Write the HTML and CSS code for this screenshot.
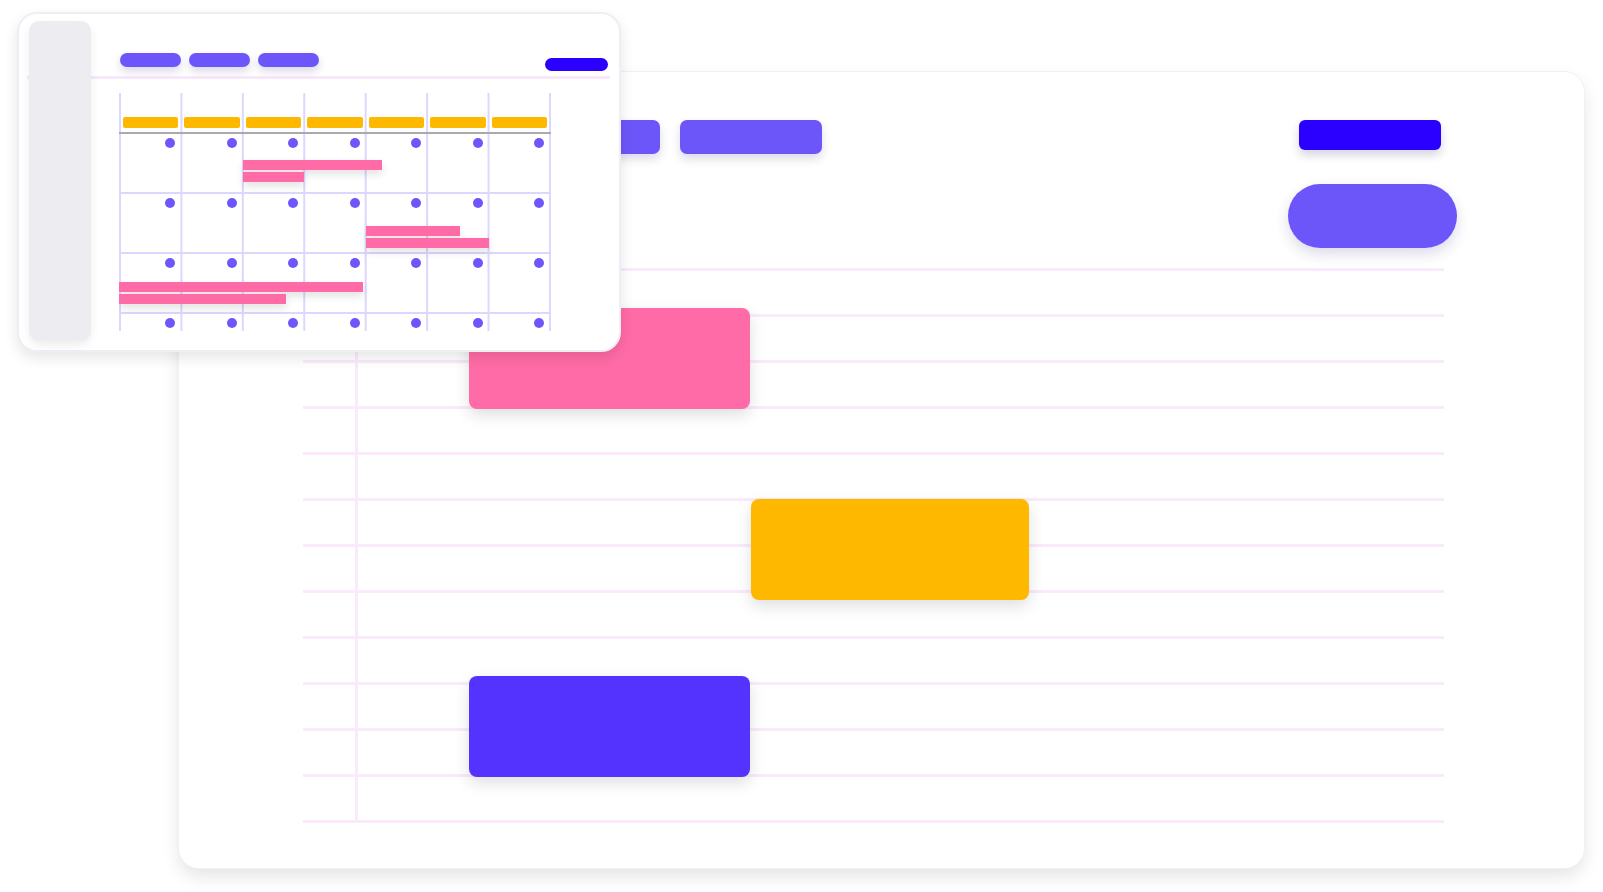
FILE: index.html
```html
<!DOCTYPE html>
<html lang="en">
<head>
<meta charset="utf-8">
<title>Schedule views</title>
<link rel="stylesheet" href="styles.css">
</head>
<body>
<div class="stage">
  <section class="board">
    <div class="board-head">
      <div class="tabs">
        <span class="tab"></span>
        <span class="tab"></span>
        <span class="tab"></span>
      </div>
      <div class="actions">
        <span class="btn-primary"></span>
        <span class="pill"></span>
      </div>
    </div>
    <div class="chart">
      <span class="blk blk-pink"></span>
      <span class="blk blk-yellow"></span>
      <span class="blk blk-purple"></span>
    </div>
  </section>

  <section class="mini">
    <aside class="side"></aside>
    <div class="mini-main">
      <div class="mini-head">
        <span class="mtab"></span>
        <span class="mtab"></span>
        <span class="mtab"></span>
        <span class="mbtn"></span>
      </div>
      <div class="cal">
        <div class="cal-head">
          <span class="day"><i></i></span><span class="day"><i></i></span><span class="day"><i></i></span><span class="day"><i></i></span><span class="day"><i></i></span><span class="day"><i></i></span><span class="day"><i></i></span>
        </div>
        <div class="week">
          <span class="cell"><b></b></span><span class="cell"><b></b></span><span class="cell"><b></b></span><span class="cell"><b></b></span><span class="cell"><b></b></span><span class="cell"><b></b></span><span class="cell"><b></b></span>
        </div>
        <div class="week">
          <span class="cell"><b></b></span><span class="cell"><b></b></span><span class="cell"><b></b></span><span class="cell"><b></b></span><span class="cell"><b></b></span><span class="cell"><b></b></span><span class="cell"><b></b></span>
        </div>
        <div class="week">
          <span class="cell"><b></b></span><span class="cell"><b></b></span><span class="cell"><b></b></span><span class="cell"><b></b></span><span class="cell"><b></b></span><span class="cell"><b></b></span><span class="cell"><b></b></span>
        </div>
        <div class="week">
          <span class="cell"><b></b></span><span class="cell"><b></b></span><span class="cell"><b></b></span><span class="cell"><b></b></span><span class="cell"><b></b></span><span class="cell"><b></b></span><span class="cell"><b></b></span>
        </div>
        <span class="ev ev-1a"></span>
        <span class="ev ev-1b"></span>
        <span class="ev ev-2a"></span>
        <span class="ev ev-2b"></span>
        <span class="ev ev-3a"></span>
        <span class="ev ev-3b"></span>
      </div>
    </div>
  </section>
</div>
</body>
</html>
```

FILE: styles.css
```css
html, body {
  margin: 0;
  padding: 0;
  background: #ffffff;
  font-family: "Liberation Sans", Arial, sans-serif;
}

.stage {
  position: relative;
  width: 1603px;
  height: 892px;
  overflow: hidden;
  background: #ffffff;
}

/* ---------- big board ---------- */
.board {
  position: absolute;
  left: 179px;
  top: 72px;
  width: 1405px;
  height: 796px;
  box-sizing: border-box;
  padding-top: 48px;
  background: #ffffff;
  border-radius: 20px;
  box-shadow: 0 0 0 1px #f1f1f3, 0 8px 18px rgba(0, 0, 0, 0.11);
}

.board-head {
  display: flex;
  justify-content: space-between;
  align-items: flex-start;
  padding: 0 127px 0 177px;
}

.tabs {
  display: flex;
  gap: 20px;
}

.tab {
  display: block;
  width: 142px;
  height: 34px;
  border-radius: 7px;
  background: #6c56f9;
  box-shadow: 0 5px 10px rgba(40, 30, 110, 0.16);
}

.actions {
  display: flex;
  flex-direction: column;
  align-items: center;
  gap: 34px;
  width: 169px;
}

.btn-primary {
  display: block;
  width: 142px;
  height: 30px;
  margin-right: 5px;
  border-radius: 6px;
  background: #2b00ff;
  box-shadow: 0 5px 10px rgba(20, 10, 80, 0.18);
}

.pill {
  display: block;
  width: 169px;
  height: 64px;
  border-radius: 32px;
  background: #6c56f9;
  box-shadow: 0 6px 14px rgba(40, 30, 110, 0.16);
}

.chart {
  position: relative;
  margin: 20px 0 0 124px;
  width: 1141px;
  height: 555px;
  background: repeating-linear-gradient(to bottom, #fbeafb 0, #fbeafb 3px, transparent 3px, transparent 46px);
}

.chart::before {
  content: "";
  position: absolute;
  left: 52px;
  top: 0;
  bottom: 0;
  width: 3px;
  background: #fbeafb;
}

.blk {
  position: absolute;
  width: 281px;
  height: 101px;
  border-radius: 8px;
  box-shadow: 0 6px 16px rgba(0, 0, 0, 0.13);
}

.blk-pink {
  left: 166px;
  top: 40px;
  background: #ff6ba6;
}

.blk-yellow {
  left: 448px;
  top: 231px;
  width: 278px;
  background: #ffb800;
}

.blk-purple {
  left: 166px;
  top: 408px;
  background: #5433ff;
}

/* ---------- mini calendar window ---------- */
.mini {
  position: absolute;
  z-index: 2;
  left: 17px;
  top: 12px;
  width: 604px;
  height: 340px;
  box-sizing: border-box;
  display: flex;
  align-items: flex-start;
  background: #ffffff;
  border: 2px solid #efeef4;
  border-radius: 20px;
  box-shadow: 0 6px 14px rgba(0, 0, 0, 0.1);
}

.side {
  position: relative;
  z-index: 1;
  flex: none;
  width: 62px;
  height: 320px;
  margin: 7px 0 0 10px;
  border-radius: 10px;
  background: #edecf1;
  box-shadow: 0 4px 10px rgba(0, 0, 0, 0.07);
}

.mini-main {
  flex: 1;
  min-width: 0;
}

.mini-head {
  display: flex;
  align-items: flex-start;
  gap: 8px;
  margin: 0 9px 0 -64px;
  padding: 39px 2px 5px 93px;
  border-bottom: 3px solid #f7e9fb;
}

.mtab {
  display: block;
  width: 61px;
  height: 14px;
  border-radius: 7px;
  background: #6c56f9;
  box-shadow: 0 4px 8px rgba(40, 30, 110, 0.18);
}

.mbtn {
  display: block;
  width: 63px;
  height: 13px;
  margin-top: 5px;
  margin-left: auto;
  border-radius: 7px;
  background: #2b00ff;
}

.cal {
  position: relative;
  margin: 14px 0 0 28px;
  width: 432px;
  height: 238px;
  overflow: hidden;
  background-image: linear-gradient(to right, #ddd6fe 0, #ddd6fe 2px, transparent 2px);
  background-size: 61.43px 100%;
  background-repeat: repeat-x;
}

.cal-head {
  display: grid;
  grid-template-columns: repeat(7, 61.43px);
  height: 15px;
  padding-top: 24px;
  border-bottom: 2px solid #a9a9ae;
}

.day {
  display: block;
  padding: 0 2px 0 4px;
}

.day i {
  display: block;
  height: 11px;
  border-radius: 2px;
  background: #ffb800;
}

.week {
  display: grid;
  grid-template-columns: repeat(7, 61.43px);
  height: 58px;
  border-bottom: 2px solid #ddd6fe;
}

.cell {
  display: flex;
  justify-content: flex-end;
  padding: 4px 5px 0 0;
}

.cell b {
  display: block;
  width: 10px;
  height: 10px;
  border-radius: 50%;
  background: #6e57fa;
}

.ev {
  position: absolute;
  height: 10px;
  background: #ff6ba6;
  box-shadow: 0 4px 8px rgba(0, 0, 0, 0.12);
}

.ev-1a { left: 124px; top: 67px; width: 139px; }
.ev-1b { left: 124px; top: 79px; width: 61px; }
.ev-2a { left: 247px; top: 133px; width: 94px; }
.ev-2b { left: 247px; top: 145px; width: 123px; }
.ev-3a { left: 0; top: 189px; width: 244px; }
.ev-3b { left: 0; top: 201px; width: 167px; }
```
